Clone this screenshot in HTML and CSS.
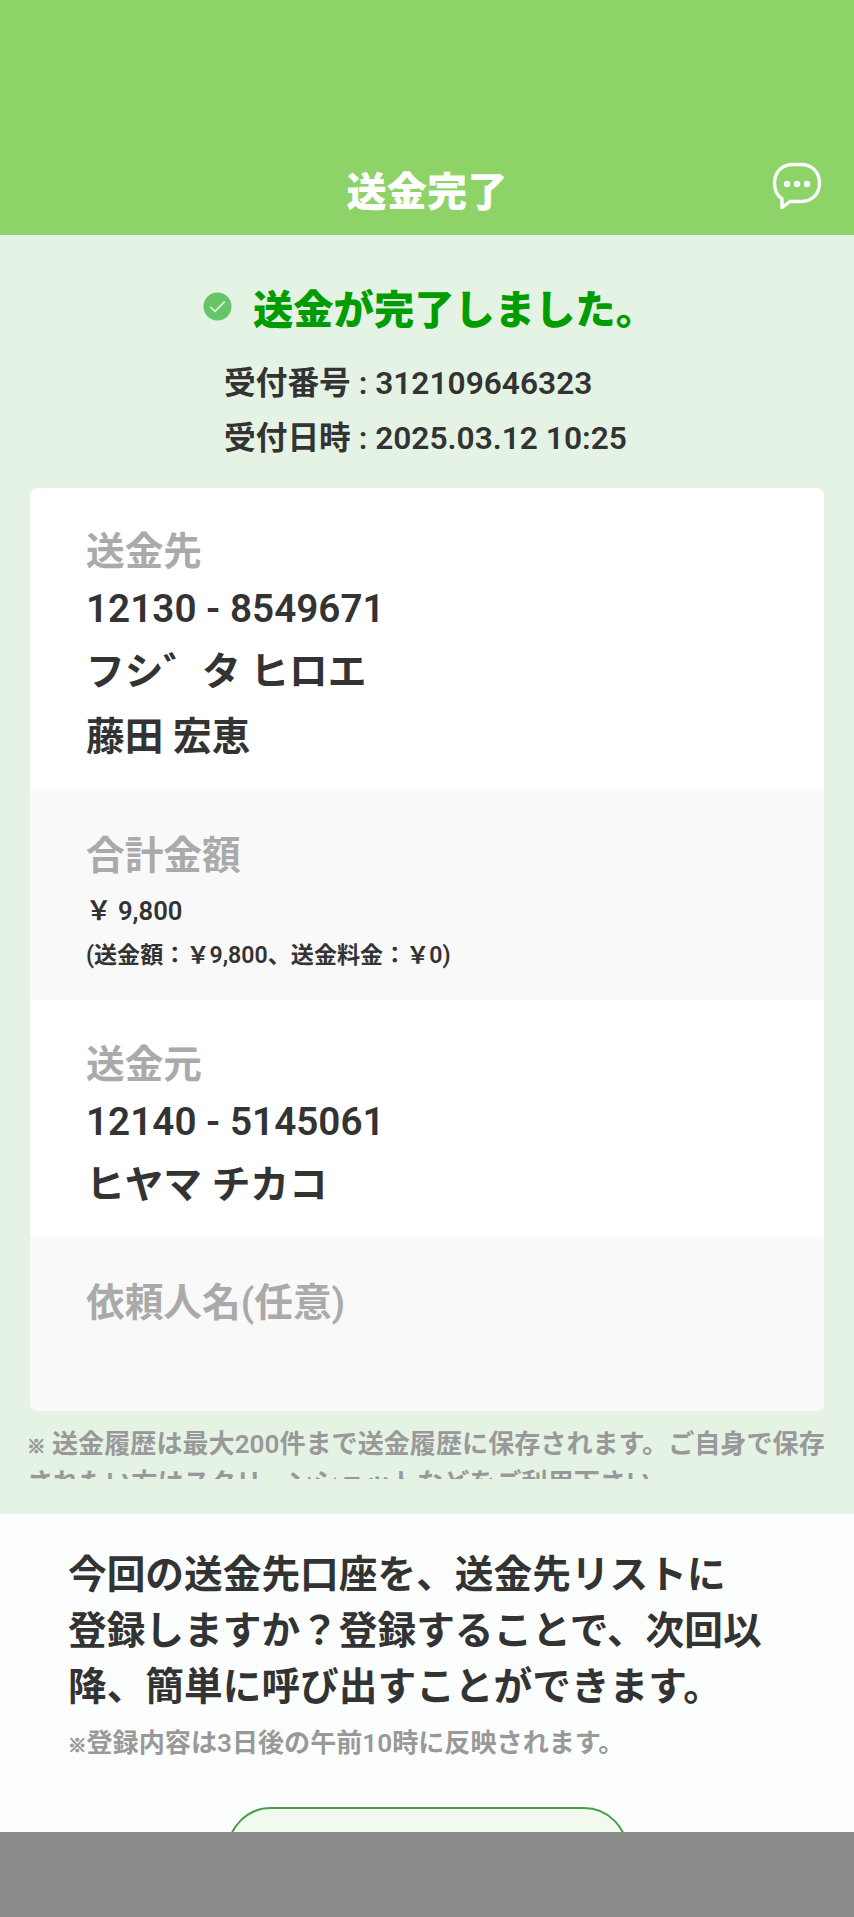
FILE: index.html
```
<!DOCTYPE html>
<html lang="ja">
<head>
    <meta charset="UTF-8">
    <title>送金完了</title>
    <link rel="stylesheet" href="styles.css">
</head>
<body>
    <header class="header">
        <h1>送金完了</h1>
        <svg class="chat-icon" viewBox="0 0 50 48" fill="none">
            <path d="M21 2.500H29C40 2.500 47.500 10 47.500 21C47.500 32 40 39.500 29 39.500H18L10 45.500V37C5 33.500 2.500 28 2.500 21C2.500 10 10 2.500 21 2.500Z" stroke="#fff" stroke-width="3.400" stroke-linejoin="round"/>
            <circle cx="15" cy="22" r="3.200" fill="#fff"/>
            <circle cx="25" cy="22" r="3.200" fill="#fff"/>
            <circle cx="35" cy="22" r="3.200" fill="#fff"/>
        </svg>
    </header>

    <main class="result">
        <div class="done">
            <svg class="check-icon" viewBox="0 0 30 30" fill="none">
                <circle cx="15" cy="15" r="14.500" fill="#66c566"/>
                <path d="M7.500 15.500L12.500 20L22.500 10" stroke="#e5f5e5" stroke-width="1.600"/>
            </svg>
            <h2>送金が完了しました。</h2>
        </div>
        <div class="receipt">
            <p>受付番号 : 312109646323</p>
            <p>受付日時 : 2025.03.12 10:25</p>
        </div>

        <div class="card">
            <section class="item item-to">
                <h3>送金先</h3>
                <p class="account">12130 - 8549671</p>
                <p class="name">フシ゛タ ヒロエ</p>
                <p class="name kanji">藤田 宏恵</p>
            </section>
            <section class="item item-amount gray">
                <h3>合計金額</h3>
                <p class="total">￥ 9,800</p>
                <p class="detail">(送金額：￥9,800、送金料金：￥0)</p>
            </section>
            <section class="item item-from">
                <h3>送金元</h3>
                <p class="account">12140 - 5145061</p>
                <p class="name">ヒヤマ チカコ</p>
            </section>
            <section class="item item-client gray">
                <h3>依頼人名(任意)</h3>
            </section>
        </div>

        <p class="note"><span class="mark">※</span> 送金履歴は最大200件まで送金履歴に保存されます。ご自身で保存<br>されたい方はスクリーンショットなどをご利用下さい。</p>
    </main>

    <div class="register">
        <p class="question">今回の送金先口座を、送金先リストに<br>登録しますか？登録することで、次回以<br>降、簡単に呼び出すことができます。</p>
        <p class="sub"><span class="mark">※</span>登録内容は3日後の午前10時に反映されます。</p>
        <button class="register-button" type="button"></button>
    </div>

    <div class="nav-bar"></div>
</body>
</html>
```
FILE: styles.css
```
* {
    box-sizing: border-box;
}

body {
    margin: 0;
    width: 854px;
    height: 1917px;
    overflow: hidden;
    display: flex;
    flex-direction: column;
    font-family: Roboto, "Noto Sans CJK JP", sans-serif;
    font-weight: 600;
    color: #333;
    background-color: #e5f3e5;
}

h1, h2, h3, p {
    margin: 0;
    white-space: nowrap;
}

.header {
    height: 235px;
    flex: none;
    display: grid;
    grid-template-columns: 1fr auto 1fr;
    background-color: #8dd368;
    color: #fff;
}

.header h1 {
    grid-column: 2;
    padding-top: 163px;
    font-size: 40.2px;
    line-height: 60px;
    font-weight: 900;
}

.chat-icon {
    width: 50px;
    height: 48px;
    margin: 162px 32px 0 0;
    justify-self: end;
}

.result {
    height: 1279px;
    flex: none;
}

.done {
    display: flex;
    align-items: center;
    gap: 21px;
    padding: 46px 0 0 203px;
}

.check-icon {
    width: 29px;
    height: 29px;
    margin-top: -9px;
}

.done h2 {
    font-size: 40.3px;
    line-height: 60px;
    font-weight: 900;
    color: #009c00;
}

.receipt {
    padding: 16px 0 0 224px;
    font-size: 31.7px;
    line-height: 54.5px;
}

.card {
    width: 794px;
    margin: 22px 0 0 30px;
    border-radius: 8px;
    overflow: hidden;
    background-color: #fff;
}

.item {
    padding: 36px 56px 0;
    font-size: 38.7px;
}

.gray {
    background-color: #f9f9f9;
}

.item h3 {
    font-size: 38.7px;
    line-height: 56px;
    font-weight: 600;
    color: #aaa;
}

.item-to {
    height: 303px;
}

.item-amount {
    height: 209px;
    padding-top: 37px;
}

.item-from {
    height: 237px;
    padding-top: 37px;
}

.item-client {
    height: 174px;
    padding-top: 38px;
}

.account {
    margin-top: 6px;
    line-height: 46px;
}

.name {
    margin-top: 12px;
    line-height: 56px;
}

.kanji {
    margin-top: 9px;
}

.total {
    margin-top: 9px;
    font-size: 25.6px;
    line-height: 36px;
}

.detail {
    margin-top: 9px;
    font-size: 23.1px;
    line-height: 36px;
}

.note {
    height: 53px;
    margin: 15px 0 0 27px;
    overflow: hidden;
    font-size: 26.1px;
    line-height: 36px;
    color: #999;
}

.mark {
    font-size: 18.5px;
    -webkit-text-stroke: 1px #999;
}

.register {
    height: 318px;
    flex: none;
    padding: 33px 68px 0;
    overflow: hidden;
    background-color: #fcfefd;
}

.question {
    font-size: 38.7px;
    line-height: 56.2px;
}

.sub {
    margin-top: 8px;
    font-size: 26.1px;
    line-height: 38px;
    color: #999;
}

.register-button {
    display: block;
    width: 401px;
    height: 88px;
    margin: 42px auto 0;
    border: 2px solid #43a047;
    border-radius: 44px;
    background-color: #f2faf0;
}

.nav-bar {
    flex: 1;
    background-color: #8b8b8b;
}
```
